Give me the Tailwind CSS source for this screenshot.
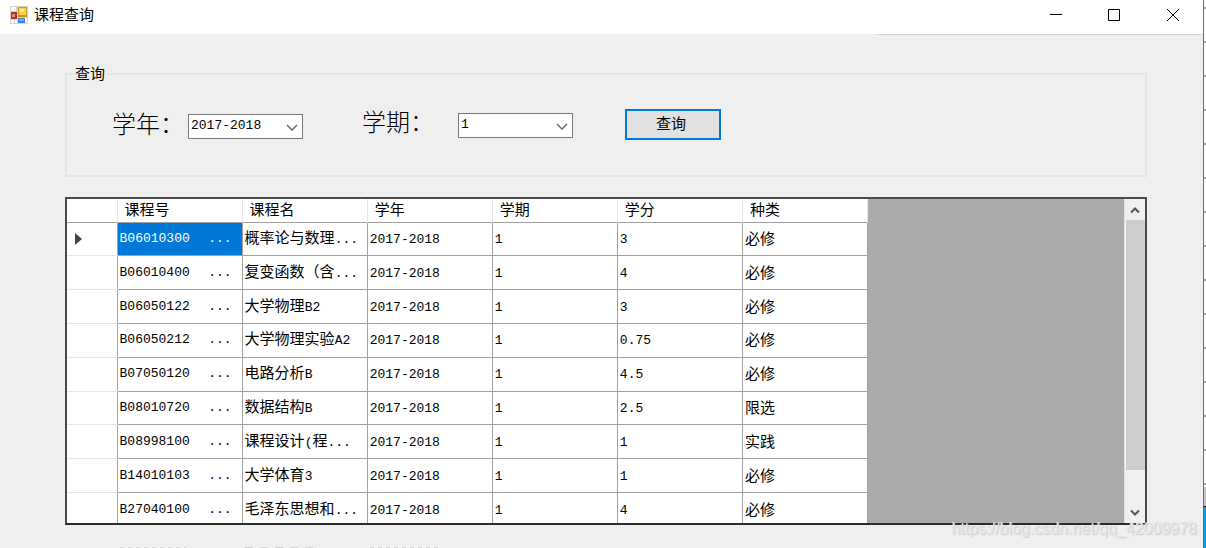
<!DOCTYPE html>
<html lang="zh-CN">
<head>
<meta charset="utf-8">
<title>课程查询</title>
<script src="https://cdn.jsdelivr.net/npm/@tailwindcss/browser@4"></script>
</head>
<body class="relative flex h-screen overflow-hidden bg-[#efefef] font-['Liberation_Sans','Noto_Sans_CJK_SC',sans-serif] text-[15px] text-black">
<div class="flex min-w-0 flex-1 flex-col">
  <header class="flex h-[34px] shrink-0 items-center bg-white pl-[10px]">
    <svg class="mb-1 h-[18px] w-[18px]" viewBox="0 0 18 18" aria-hidden="true">
      <rect width="18" height="18" fill="#d4d4d4"/>
      <rect x="1" y="1" width="5" height="4" fill="#fff"/><rect x="1" y="14" width="3" height="3" fill="#fff"/><rect x="5" y="14" width="2" height="3" fill="#fff"/><rect x="15" y="12" width="2" height="5" fill="#fff"/>
      <rect x="1" y="6" width="6" height="7" fill="#b5302a"/><rect x="2" y="8" width="3" height="3" fill="#e9887c"/>
      <rect x="8" y="1" width="9" height="10" fill="#c99a16"/><rect x="9" y="2" width="7" height="7" fill="#fbd24c"/><rect x="10" y="3" width="4" height="3" fill="#ffec9a"/>
      <rect x="8" y="12" width="7" height="5" fill="#4a7bdc"/><rect x="9" y="13" width="5" height="2" fill="#7fa9f2"/>
    </svg>
    <h1 class="mb-1 ml-[6px] flex-1">课程查询</h1>
    <div class="mb-1 flex">
      <button class="flex h-[30px] w-[58px] items-center justify-center" aria-label="最小化"><svg class="h-3 w-3" viewBox="0 0 12 12" stroke="#000" fill="none"><path d="M0 5.5H12"/></svg></button>
      <button class="flex h-[30px] w-[58px] items-center justify-center" aria-label="最大化"><svg class="h-3 w-3" viewBox="0 0 12 12" stroke="#000" fill="none"><path d="M.5 .5H11.5V11.5H.5Z"/></svg></button>
      <button class="flex h-[30px] w-[60px] items-center justify-center" aria-label="关闭"><svg class="h-3 w-3" viewBox="0 0 12 12" stroke="#000" fill="none"><path d="M0 0L12 12M12 0L0 12"/></svg></button>
    </div>
  </header>
  <div class="ml-auto h-px w-[326px] shrink-0 bg-[#d6d6d6]"></div>

  <main class="flex min-h-0 flex-1 flex-col pt-[28px] pr-[56px] pl-[65px]">
    <fieldset class="h-[114px] border-2 border-[#e4e4e4]">
      <legend class="ml-[6px] px-[2px] leading-[22px]">查询</legend>
      <div class="flex items-start pt-[22px] pl-[45px]">
        <label for="year" class="w-[76px] text-[24px] leading-[36px] font-light whitespace-nowrap">学年：</label>
        <div class="relative mt-[7px] w-[115px]">
          <select id="year" class="block h-[25px] w-full appearance-none border border-[#7a7a7a] bg-white pb-[2px] pl-[2px] font-['Liberation_Mono',monospace] text-[13px]"><option>2017-2018</option></select>
          <svg class="pointer-events-none absolute top-[10px] right-[5px] h-[7px] w-3" viewBox="0 0 12 7" fill="none" stroke="#606060" stroke-width="1.3"><path d="M1 1L6 6L11 1"/></svg>
        </div>
        <label for="term" class="ml-[59px] w-[96px] text-[24px] leading-[32px] font-light whitespace-nowrap">学期：</label>
        <div class="relative mt-[6px] w-[115px]">
          <select id="term" class="block h-[25px] w-full appearance-none border border-[#7a7a7a] bg-white pb-[2px] pl-[2px] font-['Liberation_Mono',monospace] text-[13px]"><option>1</option></select>
          <svg class="pointer-events-none absolute top-[10px] right-[5px] h-[7px] w-3" viewBox="0 0 12 7" fill="none" stroke="#606060" stroke-width="1.3"><path d="M1 1L6 6L11 1"/></svg>
        </div>
        <button class="mt-[2px] ml-[52px] flex h-[31px] w-[96px] items-center justify-center border-2 border-[#0078d7] bg-[#e1e1e1] pr-1">查询</button>
      </div>
    </fieldset>

    <section class="mt-[20px] flex h-[328px] overflow-hidden border-2 border-[#4a4a4a] border-b-[#2a2a2a] bg-[#ababab]">
      <table class="h-[328px] w-[801px] shrink-0 table-fixed border-collapse bg-white text-left">
        <colgroup><col class="w-[50px]"><col class="w-[125px]"><col class="w-[125px]"><col class="w-[125px]"><col class="w-[125px]"><col class="w-[125px]"><col class="w-[125px]"></colgroup>
        <thead><tr class="h-[23px] border-b border-[#a0a0a0] leading-[22px] [&>th]:border-r [&>th]:border-[#e5e5e5] [&>th]:p-0 [&>th]:pl-[7px] [&>th]:font-normal">
          <th aria-label="行"></th><th>课程号</th><th>课程名</th><th>学年</th><th>学期</th><th>学分</th><th>种类</th>
        </tr></thead>
        <tbody id="rows"></tbody>
      </table>
      <div class="ml-auto flex w-[21px] flex-col items-center border-l border-[#e3e3e3] bg-[#f0f0f0]">
        <button class="flex h-[21px] w-full shrink-0 items-center justify-center" aria-label="向上滚动"><svg class="h-2 w-[10px]" viewBox="0 0 10 8" fill="none" stroke="#555" stroke-width="2"><path d="M1 6.500L5 2.500L9 6.500"/></svg></button>
        <div class="h-[250px] w-[19px] shrink-0 bg-[#cdcdcd]"></div>
        <button class="mt-auto flex h-[21px] w-full shrink-0 items-center justify-center" aria-label="向下滚动"><svg class="h-2 w-[10px]" viewBox="0 0 10 8" fill="none" stroke="#555" stroke-width="2"><path d="M1 1.500L5 5.500L9 1.500"/></svg></button>
      </div>
    </section>
    <div class="mt-auto flex h-px shrink-0 pl-[55px]" aria-hidden="true">
      <div class="w-[125px]"><div class="h-px w-[66px] bg-[repeating-linear-gradient(to_right,#d2d2d2_0px,#d2d2d2_4px,#efefef_4px,#efefef_8px)]"></div></div>
      <div class="w-[125px]"><div class="h-px w-[72px] bg-[repeating-linear-gradient(to_right,#d2d2d2_0px,#d2d2d2_8px,#efefef_8px,#efefef_15px)]"></div></div>
      <div class="h-px w-[68px] bg-[repeating-linear-gradient(to_right,#d2d2d2_0px,#d2d2d2_4px,#efefef_4px,#efefef_8px)]"></div>
    </div>
  </main>
</div>
<aside class="flex w-[3px] shrink-0 flex-col border-l border-[#1f7fcf] bg-white" aria-hidden="true">
  <div class="h-[487px] bg-[repeating-linear-gradient(to_bottom,#fff_0px,#fff_7px,#a8a8a8_7px,#a8a8a8_9px,#fff_9px,#fff_34px)]"></div>
  <div class="h-5 border-b border-black bg-[#c8c8c8]"></div>
  <div class="flex-1 bg-[#0a9bf5]"></div>
</aside>
<p class="absolute right-[9px] bottom-[7px] text-base text-[#e6e6e6] [text-shadow:1px_1px_1px_#cccccc]">https://blog.csdn.net/qq_42009978</p>
<script>
const rows = [
  ['B06010300', '概率论与数理...', '3', '必修'],
  ['B06010400', '复变函数（含...', '4', '必修'],
  ['B06050122', '大学物理B2', '3', '必修'],
  ['B06050212', '大学物理实验A2', '0.75', '必修'],
  ['B07050120', '电路分析B', '4.5', '必修'],
  ['B08010720', '数据结构B', '2.5', '限选'],
  ['B08998100', '课程设计(程...', '1', '实践'],
  ['B14010103', '大学体育3', '1', '必修'],
  ['B27040100', '毛泽东思想和...', '4', '必修']
];
const mono = t => `<span class="font-['Liberation_Mono',monospace] text-[13px]">${t}</span>`;
const mix = t => t.replace(/[\x20-\x7e]+/g, mono);
const cell = 'overflow-hidden border border-[#a0a0a0] p-0 pl-[2px] leading-[22px] whitespace-nowrap';
document.getElementById('rows').innerHTML = rows.map(([id, name, credit, kind], i) => `
<tr>
  <th class="border-b border-[#e5e5e5] p-0 pl-[8px]">${i ? '' : '<svg class="h-3 w-2" viewBox="0 0 8 12"><path d="M0 0L7 6L0 12Z" fill="#444"/></svg>'}</th>
  <td class="${cell} ${i ? '' : 'bg-[#0078d7] text-white'}"><div class="flex justify-between pr-[10px]">${mono(id)}${mono('...')}</div></td>
  <td class="${cell}">${mix(name)}</td>
  <td class="${cell}">${mono('2017-2018')}</td>
  <td class="${cell}">${mono('1')}</td>
  <td class="${cell}">${mono(credit)}</td>
  <td class="${cell}">${kind}</td>
</tr>`).join('');
</script>
</body>
</html>
